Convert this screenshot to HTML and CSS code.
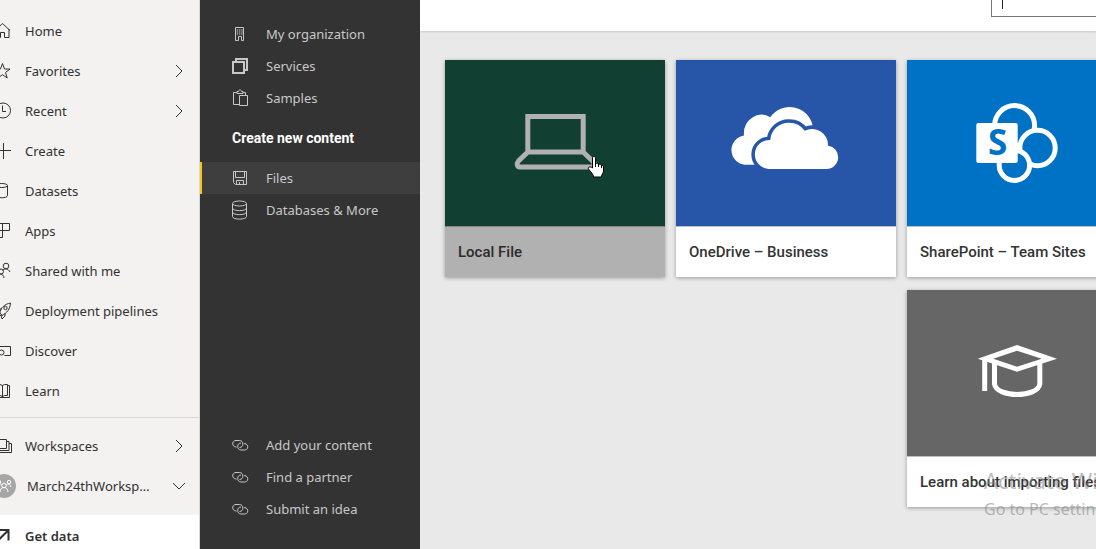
FILE: index.html
```html
<!DOCTYPE html>
<html lang="en">
<head>
<meta charset="utf-8">
<meta name="viewport" content="width=device-width, initial-scale=1">
<title>Get data</title>
<link rel="stylesheet" href="styles.css">
</head>
<body>
<div class="app">
  <nav class="sidebar" aria-label="Main">
    <ul class="nav-list">
      <li><a class="nav-item" href="#"><svg class="nav-icon" viewBox="0 0 20 20"><path d="M3 9.500 10.500 2.500 18 9.500M5 8v8.500h3.500v-5h4v5H17V8"/></svg><span class="nav-text">Home</span></a></li>
      <li><a class="nav-item" href="#"><svg class="nav-icon" viewBox="0 0 20 20"><path d="M10.500 2.500 12.500 8h5.500l-4.500 3.500 1.700 5.500-4.700-3.300L5.800 17l1.700-5.500L3 8h5.500z"/></svg><span class="nav-text">Favorites</span><svg class="chevron" viewBox="0 0 16 16"><path d="m5 2 6 6-6 6"/></svg></a></li>
      <li><a class="nav-item" href="#"><svg class="nav-icon" viewBox="0 0 20 20"><circle cx="11" cy="9.500" r="7.500"/><path d="M10.500 4.500v6H14"/></svg><span class="nav-text">Recent</span><svg class="chevron" viewBox="0 0 16 16"><path d="m5 2 6 6-6 6"/></svg></a></li>
      <li><a class="nav-item" href="#"><svg class="nav-icon" viewBox="0 0 20 20"><path d="M3 9.500h16M11.500 2v16"/></svg><span class="nav-text">Create</span></a></li>
      <li><a class="nav-item" href="#"><svg class="nav-icon" viewBox="0 0 20 20"><path d="M4 4.500v10c0 3 11.500 3 11.500 0v-10"/><ellipse cx="9.750" cy="4.500" rx="5.750" ry="2"/></svg><span class="nav-text">Datasets</span></a></li>
      <li><a class="nav-item" href="#"><svg class="nav-icon" viewBox="0 0 20 20"><path d="M3.500 2.500h14v7h-14zM10.500 2.500v14h-7v-7"/></svg><span class="nav-text">Apps</span></a></li>
      <li><a class="nav-item" href="#"><svg class="nav-icon" viewBox="0 0 20 20"><circle cx="14" cy="5" r="2.800"/><circle cx="9" cy="10.500" r="2.500"/><path d="M10.500 9.500c1.500-2.500 6-2 7.500 1.500M5 17c0-5 7-5 7 0"/></svg><span class="nav-text">Shared with me</span></a></li>
      <li><a class="nav-item" href="#"><svg class="nav-icon" viewBox="0 0 20 20"><path d="M8 12c0-5 5-9 10.500-10C18 8 15 12 10 14.500zM10 8H7l-4 4 4 1M13 12v3l-3 3-1-4M5 18l5-5"/><circle cx="13.500" cy="7" r="1.700"/></svg><span class="nav-text">Deployment pipelines</span></a></li>
      <li><a class="nav-item" href="#"><svg class="nav-icon" viewBox="0 0 20 20"><path d="M3 5.500h15.500v9h-6"/><circle cx="9.500" cy="11.500" r="2.500"/></svg><span class="nav-text">Discover</span></a></li>
      <li><a class="nav-item" href="#"><svg class="nav-icon" viewBox="0 0 20 20"><path d="M3 3.500h5l2.500 1 2-1h3v11h-3l-2 1-2.500-1H3M10.500 4v12M15.500 4.500h2v12H3"/></svg><span class="nav-text">Learn</span></a></li>
    </ul>
    <ul class="nav-list nav-workspaces">
      <li><a class="nav-item" href="#"><svg class="nav-icon" viewBox="0 0 20 20"><path d="M2 3.500h12.500v9H2M14.500 5.500h2.500v9H4M17 7.500h2.500v9H5"/></svg><span class="nav-text">Workspaces</span><svg class="chevron" viewBox="0 0 16 16"><path d="m5 2 6 6-6 6"/></svg></a></li>
      <li><a class="nav-item" href="#"><svg class="nav-icon avatar" viewBox="0 0 24 24"><circle class="disc" cx="12" cy="12" r="12"/><circle cx="12" cy="11.500" r="2.300"/><circle cx="7" cy="8" r="1.700"/><circle cx="17" cy="8" r="1.700"/><path d="M8 18c0-6 8-6 8 0M5 13c1-4 4-3 5-2m9 2c-1-4-4-3-5-2"/></svg><span class="nav-text">March24thWorkspace</span><svg class="chevron" viewBox="0 0 16 16"><path d="m2 5 6 6 6-6"/></svg></a></li>
    </ul>
    <a class="nav-item get-data" href="#"><svg class="nav-icon" viewBox="0 0 20 20"><path d="M6 4h10.500v10.500M16.500 4 4 16.500"/></svg><span class="nav-text">Get data</span></a>
  </nav>

  <nav class="panel" aria-label="Content sources">
    <div>
      <a class="panel-item" href="#"><svg class="panel-icon" viewBox="0 0 18 18"><path d="M3.500 2.500h8v13h-2v-4h-3v4h-3z"/><path stroke-dasharray="1.500 .7" d="M4.700 5h6M4.700 7h6M4.700 9h6"/></svg>My organization</a>
      <a class="panel-item" href="#"><svg class="panel-icon thick" viewBox="0 0 18 18"><path d="M1 5h11v11H1zM4 4V2h11v11h-3"/></svg>Services</a>
      <a class="panel-item" href="#"><svg class="panel-icon" viewBox="0 0 18 18"><path d="M7 15.500H1.500v-12H5v-1h1.500c0-2 3-2 3 0H11v2H5v-1M11 3.500h2.500v3M7.500 6.500h8v10h-8z"/></svg>Samples</a>
      <h2 class="panel-title">Create new content</h2>
      <a class="panel-item selected" href="#" aria-current="page"><svg class="panel-icon" viewBox="0 0 18 18"><path d="M1.500 2.500h13v13h-11l-2-2zM3.500 2.500v6h9v-6M4.500 15.500v-4h7v4M7.500 13v2.500"/></svg>Files</a>
      <a class="panel-item" href="#"><svg class="panel-icon tall" viewBox="0 0 18 20"><ellipse cx="7.500" cy="3.500" rx="7" ry="2.500"/><path d="M.5 3.500v13c0 3.500 14 3.500 14 0v-13M.5 8c0 3.500 14 3.500 14 0M.5 12c0 3.500 14 3.500 14 0"/></svg>Databases &amp; More</a>
    </div>
    <div>
      <a class="panel-item" href="#"><svg class="panel-icon" viewBox="0 0 18 18"><path d="M4.500 11C-.5 11-.5 4.500 4 4.500h3.500c4.500 0 4.500 7 0 7M12 7.500c5 0 5 6.500.5 6.500H9c-4.500 0-4.500-7 0-7"/></svg>Add your content</a>
      <a class="panel-item" href="#"><svg class="panel-icon" viewBox="0 0 18 18"><path d="M4.500 11C-.5 11-.5 4.500 4 4.500h3.500c4.500 0 4.500 7 0 7M12 7.500c5 0 5 6.500.5 6.500H9c-4.500 0-4.500-7 0-7"/></svg>Find a partner</a>
      <a class="panel-item" href="#"><svg class="panel-icon" viewBox="0 0 18 18"><path d="M4.500 11C-.5 11-.5 4.500 4 4.500h3.500c4.500 0 4.500 7 0 7M12 7.500c5 0 5 6.500.5 6.500H9c-4.500 0-4.500-7 0-7"/></svg>Submit an idea</a>
    </div>
  </nav>

  <div class="main">
    <header class="topbar"><input class="search" type="text" aria-label="Search"><span class="caret"></span></header>
    <main class="tiles">
      <a class="tile hovered" href="#">
        <span class="tile-art green"><svg class="art" viewBox="0 0 110 86"><g fill="none" stroke="#b1b1b1" stroke-width="5"><path d="M27.800 16.500h55.400V52H27.800zM27.800 52 18.500 61c-2.500 3-1 6 1 6h72c2 0 4.500-3 1-6l-9.300-9"/></g></svg></span>
        <span class="tile-name">Local File</span>
      </a>
      <a class="tile" href="#">
        <span class="tile-art blue"><svg class="art" viewBox="0 0 110 86"><path fill="#fff" d="M14 64.700A14.700 14.700 0 0 1 13 35.500 17.500 19 0 0 1 39.300 17.300 23.500 23.500 0 0 1 81.700 25.700V40L40 64.700z"/><path class="front-cloud" d="M37.500 69A14.500 14.500 0 0 1 39.300 40 18.500 18.500 0 0 1 58 22.700 19 19 0 0 1 73.700 30.700 16 16 0 0 1 97 45.700 11.700 11.700 0 0 1 95.500 69z"/></svg></span>
        <span class="tile-name">OneDrive – Business</span>
      </a>
      <a class="tile" href="#">
        <span class="tile-art azure"><svg class="art" viewBox="0 0 110 86"><g fill="#0072c6" stroke="#fff" stroke-width="5"><circle cx="52.600" cy="25.600" r="20"/><circle cx="75.500" cy="48" r="17.700"/><circle cx="52.400" cy="65.300" r="15.200"/></g><rect x="14.300" y="23" width="41.400" height="40" rx="2" fill="#fff"/><text class="art-letter" x="26" y="55">S</text></svg></span>
        <span class="tile-name">SharePoint – Team Sites</span>
      </a>
      <a class="tile learn" href="#">
        <span class="tile-art gray"><svg class="art" viewBox="0 0 110 86"><path fill="#fff" fill-rule="evenodd" d="M15.700 28.700 55 15l40 13.700-40 13zM31.300 28.700 55 36.700l24.700-8-24.700-8z"/><path fill="none" stroke="#fff" stroke-width="5" d="M32.500 33v21c2 14 43.300 14 45.300 0V33M22.700 29.500V61"/></svg></span>
        <span class="tile-name">Learn about importing files</span>
      </a>
    </main>
  </div>

  <div class="watermark"><p class="wm-title">Activate Windows</p><p class="wm-text">Go to PC settings to activate Windows.</p></div>
  <svg class="pointer" viewBox="0 0 17 22"><path fill="#fff" stroke="#000" d="M5.500 12V2c0-2 3-2 3 0v6c0-1 3-1 3 1 0-1 3-1 3 1 0-1 2-1 2 1v4c0 2-2 3-2 6h-8c0-3-3-5-5-8-1-2 2-3 4-1z"/><path stroke="#000" d="M8.500 7v4M11.500 8v3M14.500 9v3"/></svg>
</div>
</body>
</html>
```
FILE: styles.css
```css
* { box-sizing: border-box; }

body {
  margin: 0;
  overflow: hidden;
  font-family: "Noto Sans", "Open Sans", sans-serif;
  font-size: 13px;
  line-height: 20px;
  color: #323130;
  background: #e9e9e9;
}

a { color: inherit; text-decoration: none; }
ul { margin: 0; padding: 0; list-style: none; }

.app { display: flex; height: 100vh; overflow: hidden; position: relative; }

.sidebar {
  flex: 0 0 200px;
  display: flex;
  flex-direction: column;
  padding-top: 11px;
  background: #f3f2f1;
  border-right: 1px solid #d8d8d8;
  overflow: hidden;
}
.nav-item { display: flex; align-items: center; gap: 6px; height: 40px; padding-right: 12px; }
.nav-icon {
  flex: none;
  width: 20px;
  height: 20px;
  margin-left: -8px;
  margin-right: 7px;
  fill: none;
  stroke: #323130;
}
.nav-text { flex: 1; min-width: 0; overflow: hidden; text-overflow: ellipsis; white-space: nowrap; }
.chevron { flex: none; width: 16px; height: 16px; margin-left: 12px; fill: none; stroke: #323130; }
.nav-workspaces { margin-top: 6px; padding: 8px 0 9px; border-top: 1px solid #d8d8d8; }
.avatar { width: 24px; height: 24px; margin-right: 5px; stroke: #fff; }
.disc { fill: #a6a6a6; stroke: none; }
.get-data { flex: none; height: 42px; background: #fff; font-weight: 600; }
.get-data .nav-icon { stroke-width: 2; }

.panel {
  flex: 0 0 220px;
  display: flex;
  flex-direction: column;
  justify-content: space-between;
  padding: 18px 0 24px;
  background: #333;
  color: #c8c8c8;
}
.panel-item {
  display: flex;
  align-items: center;
  gap: 16px;
  height: 32px;
  padding-left: 30px;
  border-left: 2px solid transparent;
}
.panel-icon { flex: none; width: 18px; height: 18px; fill: none; stroke: #c8c8c8; }
.panel-icon.thick { stroke-width: 2; }
.panel-icon.tall { height: 20px; }
.panel-title {
  margin: 0;
  padding: 14px 32px;
  font: 700 14px/20px Roboto, sans-serif;
  color: #fff;
}
.selected { background: #3e3e3e; border-left-color: #f2c811; }

.main { flex: 1; min-width: 0; overflow: hidden; }
.topbar {
  position: relative;
  display: flex;
  height: 31px;
  padding-left: 571px;
  background: #fff;
  box-shadow: 0 1px 2px rgba(0, 0, 0, .15);
}
.search { flex: 1 0 200px; height: 33px; margin-top: -16px; padding: 0 10px; border: 1px solid #767676; outline: 0; background: #fff; }
.caret { position: absolute; left: 582px; top: 0; width: 1px; height: 9px; background: #222; }

.tiles { display: grid; grid-template-columns: repeat(3, 220px); gap: 13px 11px; padding: 29px 25px; }
.tile { background: #fff; box-shadow: 0 1px 4px rgba(0, 0, 0, .35); }
.tile-art { display: flex; align-items: center; justify-content: center; height: 167px; border-bottom: 1px solid #c0c0c0; }
.art { width: 110px; height: 86px; }
.tile-name { display: block; padding: 15px 13px; font: 500 15px/20px Roboto, sans-serif; color: #333; white-space: nowrap; }
.hovered { background: #b1b1b1; }
.hovered .tile-name { color: #2b2b2b; }
.learn { grid-column: 3; }
.green { background: #114032; border-color: #858585; }
.blue { background: #2756a9; }
.azure { background: #0072c6; }
.gray { background: #666; }
.front-cloud { fill: #fff; stroke: #2756a9; stroke-width: 7px; paint-order: stroke; }
.art-letter { font: 700 35px "Open Sans", sans-serif; fill: #0072c6; }

.watermark { position: absolute; left: 984px; top: 465px; color: rgba(130, 130, 130, .55); white-space: nowrap; }
.wm-title, .wm-text { margin: 0; }
.wm-title { font-size: 22px; line-height: 30px; }
.wm-text { font-size: 16px; line-height: 28px; }
.pointer { position: absolute; left: 587px; top: 156px; width: 17px; height: 22px; fill: none; }
```
